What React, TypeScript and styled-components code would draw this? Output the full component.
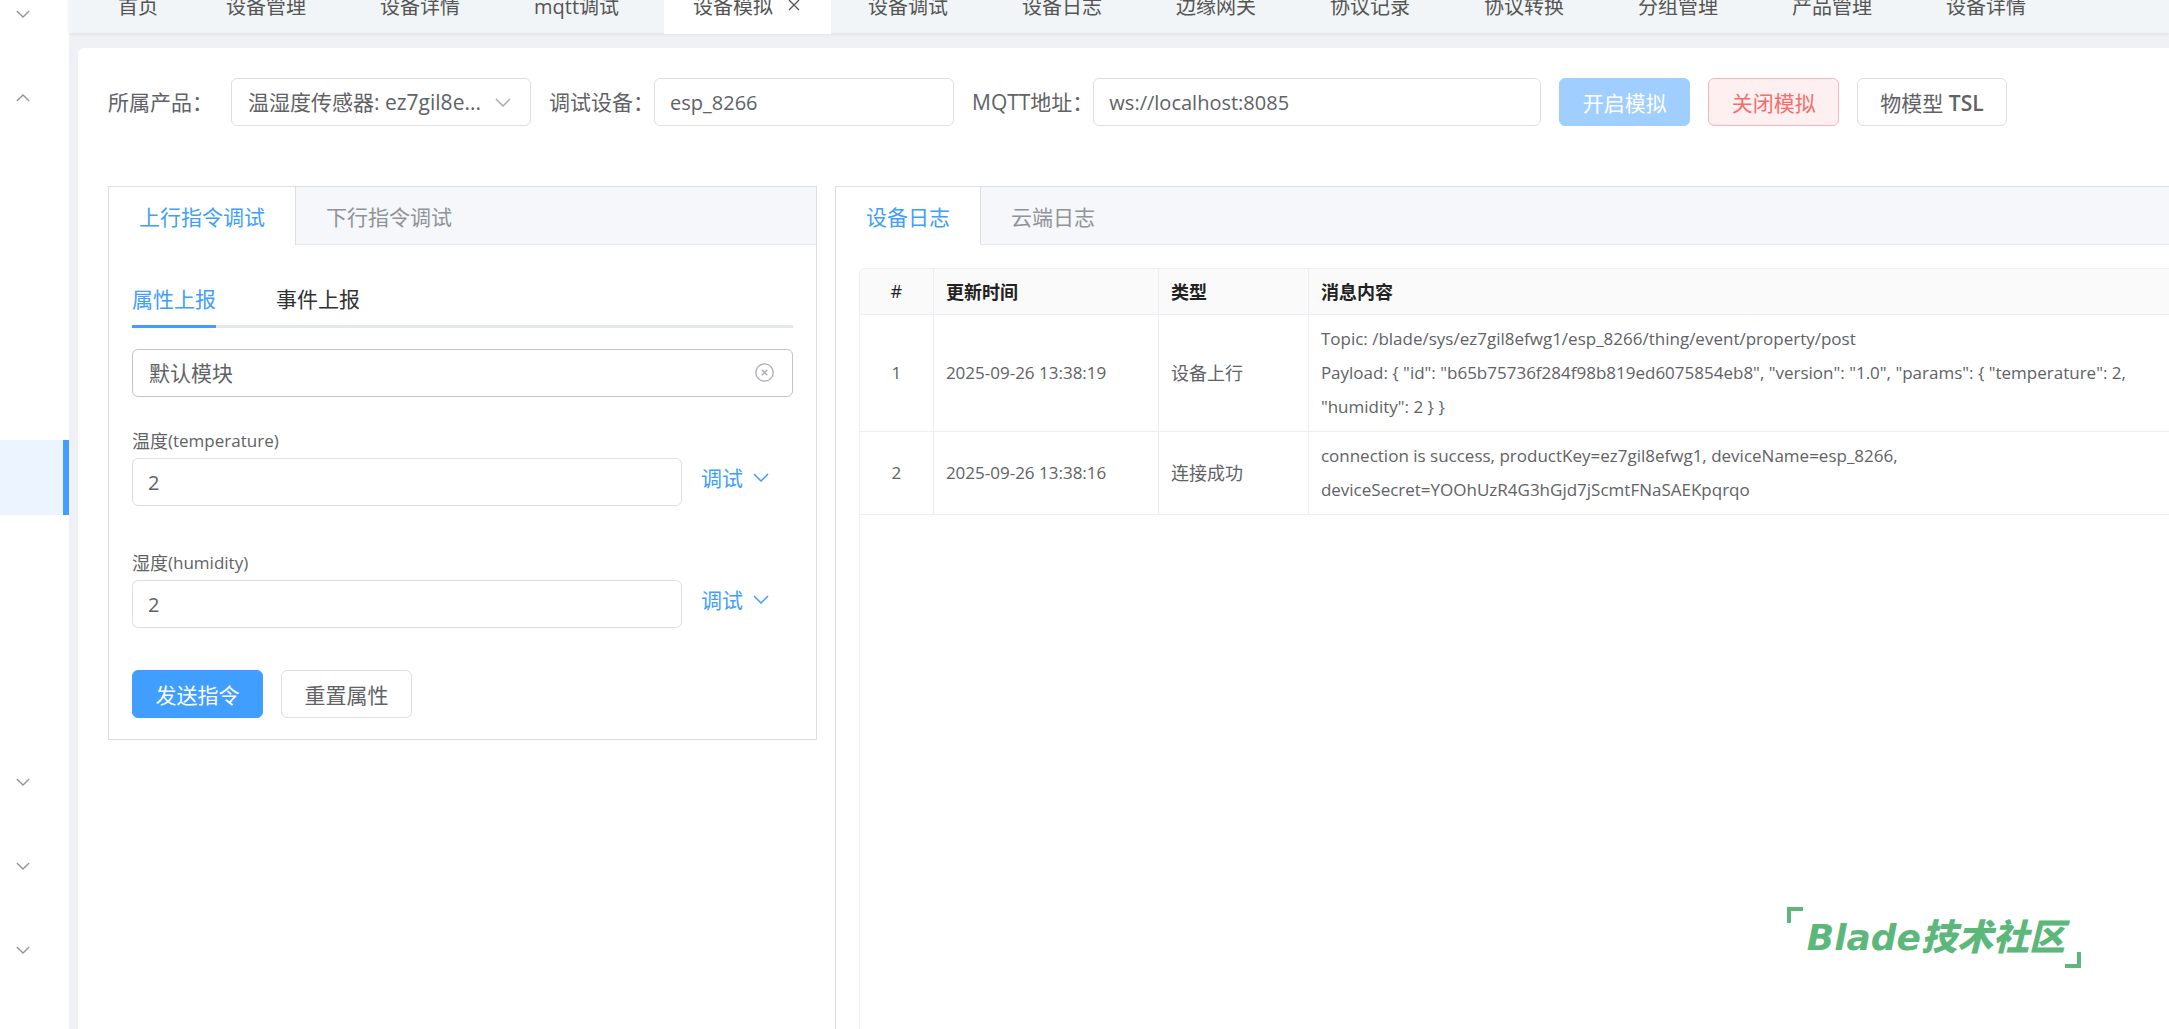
import React, { useState } from 'react';
import styled, { createGlobalStyle, css } from 'styled-components';

const color = {
  primary: '#409eff',
  primaryDisabled: '#a0cfff',
  danger: '#f56c6c',
  text: '#606266',
  textDark: '#303133',
  muted: '#909399',
  border: '#dcdfe6',
  borderLight: '#e4e7ed',
  borderTable: '#ebeef5',
  fill: '#f5f7fa',
  brand: '#5cb87a',
};

const GlobalStyle = createGlobalStyle`
  *, *::before, *::after { box-sizing: border-box; }
  body {
    margin: 0;
    overflow: hidden;
    color: ${color.text};
    font-family: "Open Sans", "Noto Sans CJK SC", sans-serif;
    font-size: 21px;
  }
  button, input, select { font: inherit; color: inherit; margin: 0; }
  button { cursor: pointer; }
`;

const App = styled.div`
  position: relative;
  height: 100vh;
  overflow: hidden;
  background: #f0f1f5;
`;

const Shell = styled.div`
  display: grid;
  grid-template-columns: 69px minmax(0, 1fr);
  min-height: calc(100vh + 88px);
  margin-top: -28px;
`;

const Sidebar = styled.nav`
  background: #fff;
`;

const MenuGroup = styled.button`
  display: flex;
  align-items: center;
  width: 100%;
  height: 84px;
  padding: 0 16px;
  border: 0;
  background: transparent;
  color: ${color.muted};
`;

const MenuItem = styled.button<{ $active?: boolean }>`
  display: block;
  width: 100%;
  height: 75px;
  padding: 0;
  border: 0;
  border-right: 6px solid ${p => (p.$active ? color.primary : 'transparent')};
  background: ${p => (p.$active ? '#ecf5ff' : 'transparent')};
`;

const Main = styled.div`
  display: flex;
  flex-direction: column;
  min-width: 0;
`;

const PageTabs = styled.div`
  display: flex;
  flex: none;
  height: 61px;
  padding-left: 12px;
  background: #f1f5f8;
  box-shadow: 0 1px 4px rgba(0, 0, 0, 0.08);
  font-size: 20px;
`;

const PageTab = styled.button<{ $home?: boolean; $active?: boolean }>`
  display: flex;
  flex: none;
  align-items: center;
  gap: 15px;
  height: 62px;
  padding: 4px 37px 0;
  border: 0;
  background: transparent;
  color: #555;
  white-space: nowrap;
  ${p => p.$home && css`padding-right: 31px;`}
  ${p =>
    p.$active &&
    css`
      margin-left: 8px;
      padding-left: 29px;
      padding-right: 31px;
      background: #fff;
    `}
`;

const Card = styled.main`
  flex: 1;
  margin: 15px -72px 0 9px;
  padding: 30px 30px 0;
  border-radius: 6px 6px 0 0;
  background: #fff;
  display: flex;
  flex-direction: column;
`;

const Toolbar = styled.form`
  display: flex;
  align-items: center;
  gap: 18px;
`;

const FormItem = styled.div<{ $gap?: number }>`
  display: flex;
  align-items: center;
  gap: ${p => p.$gap ?? 0}px;
`;

const Label = styled.label`
  line-height: 48px;
  white-space: nowrap;
`;

const control = css`
  display: block;
  height: 48px;
  padding: 0 15px;
  border: 1px solid ${color.border};
  border-radius: 6px;
  background: #fff;
  outline: none;
`;

const TextInput = styled.input<{ $width: number }>`
  ${control}
  width: ${p => p.$width}px;
  font-size: 20px;
`;

const SelectBox = styled.div<{ $width?: number }>`
  position: relative;
  width: ${p => (p.$width ? p.$width + 'px' : '100%')};
`;

const Select = styled.select<{ $hover?: boolean }>`
  ${control}
  width: 100%;
  padding-left: 16px;
  appearance: none;
  border-color: ${p => (p.$hover ? '#c0c4cc' : color.border)};
`;

const SelectIcon = styled.span`
  position: absolute;
  top: 0;
  right: 20px;
  display: flex;
  align-items: center;
  height: 48px;
  color: #a8abb2;
  pointer-events: none;
`;

const ClearButton = styled.button`
  position: absolute;
  top: 0;
  right: 19px;
  display: flex;
  align-items: center;
  height: 47px;
  padding: 0;
  border: 0;
  background: transparent;
  color: #a8abb2;
`;

const tones = {
  plain: css`
    border-color: ${color.border};
    background: #fff;
    color: ${color.text};
  `,
  primary: css`
    border-color: ${color.primary};
    background: ${color.primary};
    color: #fff;
  `,
  disabled: css`
    border-color: ${color.primaryDisabled};
    background: ${color.primaryDisabled};
    color: #fff;
  `,
  danger: css`
    border-color: #fab6b6;
    background: #fef0f0;
    color: ${color.danger};
  `,
};

const Button = styled.button<{ $tone: keyof typeof tones }>`
  min-width: 131px;
  height: 48px;
  padding: 0 22px;
  border: 1px solid;
  border-radius: 6px;
  white-space: nowrap;
  ${p => tones[p.$tone]}
`;

const Strong = styled.strong`
  font-size: 21px;
  font-weight: 600;
`;

const Panels = styled.div`
  display: grid;
  flex: 1;
  grid-template-columns: 34fr 66fr;
  gap: 18px;
  margin-top: 60px;
`;

const Panel = styled.section<{ $fill?: boolean }>`
  display: flex;
  flex-direction: column;
  align-self: ${p => (p.$fill ? 'stretch' : 'start')};
  min-width: 0;
  border: 1px solid ${color.border};
  background: #fff;
`;

const PanelTabs = styled.div`
  display: flex;
  height: 58px;
  border-bottom: 1px solid ${color.borderLight};
  background: ${color.fill};
`;

const PanelTab = styled.button<{ $active?: boolean }>`
  height: 58px;
  padding: 0 30px;
  border: 0;
  border-right: 1px solid ${p => (p.$active ? color.border : 'transparent')};
  background: ${p => (p.$active ? '#fff' : 'transparent')};
  color: ${p => (p.$active ? color.primary : color.muted)};
`;

const PanelBody = styled.div`
  display: flex;
  flex: 1;
  flex-direction: column;
  padding: 23px 23px 21px;
`;

const LineTabs = styled.div`
  display: flex;
  gap: 60px;
  height: 60px;
  margin-bottom: 21px;
  box-shadow: inset 0 -3px ${color.borderLight};
`;

const LineTab = styled.button<{ $active?: boolean }>`
  padding: 3px 0 0;
  border: 0;
  border-bottom: 3px solid ${p => (p.$active ? color.primary : 'transparent')};
  background: transparent;
  color: ${p => (p.$active ? color.primary : color.textDark)};
`;

const Fields = styled.div`
  display: flex;
  flex-direction: column;
  gap: 38px;
  margin: 25px 0 42px;
`;

const FieldLabel = styled.label`
  display: flex;
  align-items: center;
  height: 36px;
  font-size: 18px;
`;

const Latin = styled.span`
  font-size: 17px;
`;

const FieldRow = styled.div`
  display: flex;
  gap: 19px;
`;

const DebugButton = styled.button`
  display: flex;
  align-items: center;
  gap: 10px;
  height: 38px;
  padding: 0;
  border: 0;
  background: transparent;
  color: ${color.primary};
`;

const Actions = styled.div`
  display: flex;
  gap: 18px;
`;

const TableFrame = styled.div`
  flex: 1;
  overflow: hidden;
  border: 1px solid ${color.borderTable};
  border-radius: 6px 0 0 0;
`;

const Table = styled.table`
  width: 100%;
  border-collapse: separate;
  border-spacing: 0;
  table-layout: fixed;
  font-size: 18px;
`;

const Th = styled.th<{ $width?: number; $center?: boolean }>`
  width: ${p => (p.$width ? p.$width + 'px' : 'auto')};
  height: 46px;
  padding: 0 12px 2px;
  border-right: 1px solid ${color.borderTable};
  border-bottom: 1px solid ${color.borderTable};
  background: #fafafa;
  color: #222;
  font-weight: ${p => (p.$center ? 500 : 700)};
  text-align: ${p => (p.$center ? 'center' : 'left')};
`;

const Td = styled.td<{ $center?: boolean; $latin?: boolean }>`
  padding: 7px 12px;
  border-right: 1px solid ${color.borderTable};
  border-bottom: 1px solid ${color.borderTable};
  font-size: ${p => (p.$latin ? 17 : 18)}px;
  line-height: 34px;
  text-align: ${p => (p.$center ? 'center' : 'left')};
`;

const Watermark = styled.div`
  position: absolute;
  right: 88px;
  bottom: 61px;
  padding: 4px 16px 4px 20px;
  color: ${color.brand};
  font-family: "DejaVu Sans", "Noto Sans CJK SC", sans-serif;
  font-size: 36px;
  font-style: italic;
  font-weight: 900;
  line-height: 53px;
  white-space: nowrap;
  &::before,
  &::after {
    content: '';
    position: absolute;
    width: 16px;
    height: 16px;
    border: 0 solid ${color.brand};
  }
  &::before {
    top: 0;
    left: 0;
    border-width: 4px 0 0 4px;
  }
  &::after {
    right: 0;
    bottom: 0;
    border-width: 0 4px 4px 0;
  }
`;

function Chevron({ width = 14, up = false }: { width?: number; up?: boolean }) {
  return (
    <svg width={width} height={width === 14 ? 8 : 9} viewBox="0 0 16 9" fill="none" stroke="currentColor" strokeWidth="1.5" aria-hidden="true">
      <path d={up ? 'M1 8 8 1l7 7' : 'M1 1l7 7 7-7'} />
    </svg>
  );
}

function CloseIcon() {
  return (
    <svg width="12" height="12" viewBox="0 0 12 12" fill="none" stroke="currentColor" strokeWidth="1.3" aria-hidden="true">
      <path d="M1 1l10 10M11 1 1 11" />
    </svg>
  );
}

function CircleClose() {
  return (
    <svg width="19" height="19" viewBox="0 0 19 19" fill="none" stroke="currentColor" strokeWidth="1.3" aria-hidden="true">
      <circle cx="9.5" cy="9.5" r="8.7" />
      <path d="M6.7 6.7l5.6 5.6M12.3 6.7l-5.6 5.6" />
    </svg>
  );
}

const pageTabs = [
  '首页', '设备管理', '设备详情', 'mqtt调试', '设备模拟', '设备调试', '设备日志',
  '边缘网关', '协议记录', '协议转换', '分组管理', '产品管理', '设备详情',
];

const properties = [
  { id: 'temperature', name: '温度' },
  { id: 'humidity', name: '湿度' },
];

const logs = [
  {
    time: '2025-09-26 13:38:19',
    type: '设备上行',
    lines: [
      'Topic: /blade/sys/ez7gil8efwg1/esp_8266/thing/event/property/post',
      'Payload: { "id": "b65b75736f284f98b819ed6075854eb8", "version": "1.0", "params": { "temperature": 2, "humidity": 2 } }',
    ],
  },
  {
    time: '2025-09-26 13:38:16',
    type: '连接成功',
    lines: [
      'connection is success, productKey=ez7gil8efwg1, deviceName=esp_8266,',
      'deviceSecret=YOOhUzR4G3hGjd7jScmtFNaSAEKpqrqo',
    ],
  },
];

export default function DeviceSimulator() {
  const [values, setValues] = useState<Record<string, string>>({ temperature: '2', humidity: '2' });

  return (
    <App>
      <GlobalStyle />
      <Shell>
        <Sidebar>
          <MenuGroup type="button"><Chevron /></MenuGroup>
          <MenuGroup type="button"><Chevron up /></MenuGroup>
          {Array.from({ length: 8 }, (_, i) => (
            <MenuItem key={i} type="button" $active={i === 4} />
          ))}
          <MenuGroup type="button"><Chevron /></MenuGroup>
          <MenuGroup type="button"><Chevron /></MenuGroup>
          <MenuGroup type="button"><Chevron /></MenuGroup>
        </Sidebar>

        <Main>
          <PageTabs>
            {pageTabs.map((name, i) => (
              <PageTab key={i} type="button" $home={i === 0} $active={i === 4}>
                {name}
                {i === 4 && <CloseIcon />}
              </PageTab>
            ))}
          </PageTabs>

          <Card>
            <Toolbar onSubmit={e => e.preventDefault()}>
              <FormItem $gap={18}>
                <Label htmlFor="product">所属产品：</Label>
                <SelectBox $width={300}>
                  <Select id="product">
                    <option>温湿度传感器: ez7gil8e...</option>
                  </Select>
                  <SelectIcon><Chevron width={16} /></SelectIcon>
                </SelectBox>
              </FormItem>
              <FormItem>
                <Label htmlFor="device">调试设备：</Label>
                <TextInput id="device" $width={300} defaultValue="esp_8266" />
              </FormItem>
              <FormItem>
                <Label htmlFor="mqtt">MQTT地址：</Label>
                <TextInput id="mqtt" $width={448} defaultValue="ws://localhost:8085" />
              </FormItem>
              <Button type="button" $tone="disabled" disabled>开启模拟</Button>
              <Button type="button" $tone="danger">关闭模拟</Button>
              <Button type="button" $tone="plain">物模型 <Strong>TSL</Strong></Button>
            </Toolbar>

            <Panels>
              <Panel>
                <PanelTabs>
                  <PanelTab type="button" $active>上行指令调试</PanelTab>
                  <PanelTab type="button">下行指令调试</PanelTab>
                </PanelTabs>
                <PanelBody>
                  <LineTabs>
                    <LineTab type="button" $active>属性上报</LineTab>
                    <LineTab type="button">事件上报</LineTab>
                  </LineTabs>
                  <SelectBox>
                    <Select $hover aria-label="模块">
                      <option>默认模块</option>
                    </Select>
                    <ClearButton type="button"><CircleClose /></ClearButton>
                  </SelectBox>
                  <Fields>
                    {properties.map(p => (
                      <div key={p.id}>
                        <FieldLabel htmlFor={p.id}>{p.name}<Latin>({p.id})</Latin></FieldLabel>
                        <FieldRow>
                          <TextInput
                            id={p.id}
                            $width={550}
                            value={values[p.id]}
                            onChange={e => setValues({ ...values, [p.id]: e.target.value })}
                          />
                          <DebugButton type="button">调试<Chevron width={16} /></DebugButton>
                        </FieldRow>
                      </div>
                    ))}
                  </Fields>
                  <Actions>
                    <Button type="button" $tone="primary">发送指令</Button>
                    <Button type="button" $tone="plain">重置属性</Button>
                  </Actions>
                </PanelBody>
              </Panel>

              <Panel $fill>
                <PanelTabs>
                  <PanelTab type="button" $active>设备日志</PanelTab>
                  <PanelTab type="button">云端日志</PanelTab>
                </PanelTabs>
                <PanelBody>
                  <TableFrame>
                    <Table>
                      <thead>
                        <tr>
                          <Th $width={74} $center>#</Th>
                          <Th $width={225}>更新时间</Th>
                          <Th $width={150}>类型</Th>
                          <Th>消息内容</Th>
                        </tr>
                      </thead>
                      <tbody>
                        {logs.map((log, i) => (
                          <tr key={log.time}>
                            <Td $center $latin>{i + 1}</Td>
                            <Td $latin>{log.time}</Td>
                            <Td>{log.type}</Td>
                            <Td $latin>
                              {log.lines.map(line => <div key={line}>{line}</div>)}
                            </Td>
                          </tr>
                        ))}
                      </tbody>
                    </Table>
                  </TableFrame>
                </PanelBody>
              </Panel>
            </Panels>
          </Card>
        </Main>
      </Shell>
      <Watermark>Blade技术社区</Watermark>
    </App>
  );
}
